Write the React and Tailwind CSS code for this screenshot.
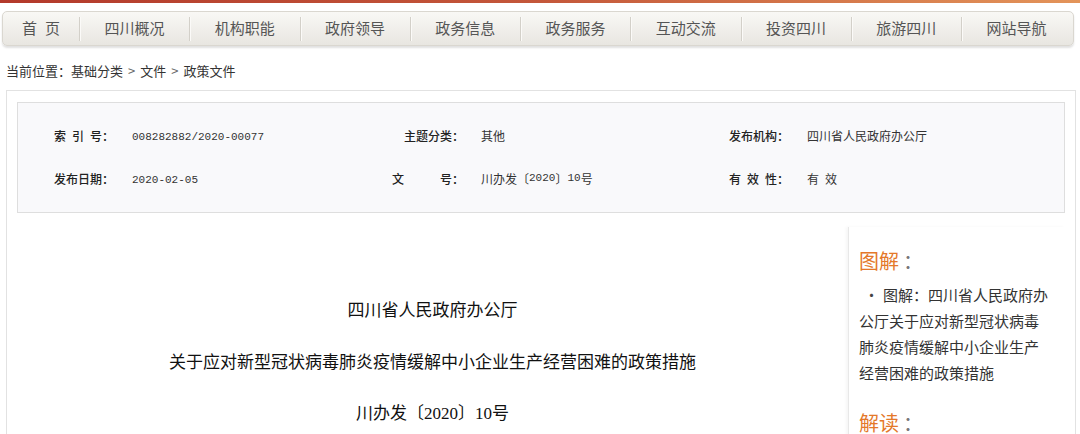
const navItems = ['四川概况', '机构职能', '政府领导', '政务信息', '政务服务', '互动交流', '投资四川', '旅游四川', '网站导航']

const meta = [
  [
    { label: ['索', '引', '号：'], value: <span className="font-['Liberation_Mono',monospace] text-[11px]">008282882/2020-00077</span> },
    { label: ['主题分类：'], right: true, value: '其他' },
    { label: ['发布机构：'], value: '四川省人民政府办公厅' },
  ],
  [
    { label: ['发布日期：'], value: <span className="font-['Liberation_Mono',monospace] text-[11px]">2020-02-05</span> },
    {
      label: ['文', '号：'],
      value: (
        <>
          川办发〔<span className="font-['Liberation_Mono',monospace] text-[11px]">2020</span>〕
          <span className="font-['Liberation_Mono',monospace] text-[11px]">10</span>号
        </>
      ),
    },
    { label: ['有', '效', '性：'], value: <span className="flex gap-[6px]"><span>有</span><span>效</span></span> },
  ],
]

function Label({ parts, right, width }) {
  return (
    <div className={`flex shrink-0 font-medium text-[#222] ${right ? 'justify-end' : 'justify-between'}`} style={{ width }}>
      {parts.map((p, i) => (
        <span key={i}>{p}</span>
      ))}
    </div>
  )
}

export default function App() {
  return (
    <div className="w-[1080px] h-[434px] overflow-hidden bg-white text-[#222] font-['Liberation_Serif','Noto_Sans_CJK_SC',serif]">
      {/* top line */}
      <div className="h-[3px] bg-linear-to-r from-[#b3392b] via-[#c4573a] to-[#e3945a]" />

      {/* nav */}
      <div className="mt-[8px] ml-[2px] w-[1072px] h-[35px] flex items-center rounded-[5px] border border-[#dad7d0] bg-linear-to-b from-[#f9f8f5] to-[#e8e6e1] shadow-[0_2px_2px_rgba(0,0,0,0.12)] text-[15px] text-[#555] font-['Noto_Sans_CJK_SC',sans-serif]">
        <div className="w-[76px] flex justify-center gap-[8px]">
          <span>首</span>
          <span>页</span>
        </div>
        {navItems.map((item) => (
          <div key={item} className="flex items-center">
            <div className="w-px h-[24px] bg-[#d3d0c9] shadow-[1px_0_0_#fbfaf8]" />
            <div className="w-[109.25px] text-center">{item}</div>
          </div>
        ))}
      </div>

      {/* breadcrumb */}
      <div className="h-[44px] pt-[6px] pl-[6px] flex items-center text-[13px] text-[#333] font-['Noto_Sans_CJK_SC',sans-serif]">
        当前位置：基础分类<span className="mx-[5px] text-[#666]">&gt;</span>文件<span className="mx-[5px] text-[#666]">&gt;</span>政策文件
      </div>

      {/* content box */}
      <div className="ml-[6px] w-[1070px] h-[400px] border border-[#e2e2e2] pt-[11px] px-[10px]">
        <div className="h-[111px] border border-[#dedede] bg-[#f9f9fb] pt-[11px] text-[12px] font-['Noto_Sans_CJK_SC',sans-serif]">
          {meta.map((row, r) => (
            <div key={r} className="h-[43px] flex items-center pl-[36px]">
              <Label parts={row[0].label} width={60} />
              <div className="ml-[18px] w-[260px] text-[#333]">{row[0].value}</div>
              <Label parts={row[1].label} right={row[1].right} width={72} />
              <div className="ml-[17px] w-[248px] flex items-center text-[#333]">{row[1].value}</div>
              <Label parts={row[2].label} width={60} />
              <div className="ml-[18px] text-[#333]">{row[2].value}</div>
            </div>
          ))}
        </div>

        <div className="flex">
          <div className="flex-1 pt-[86px] flex flex-col items-center text-[17px] leading-[24px] text-[#111] font-['Liberation_Serif','Noto_Sans_CJK_SC',serif]">
            <div>四川省人民政府办公厅</div>
            <div className="mt-[28px]">关于应对新型冠状病毒肺炎疫情缓解中小企业生产经营困难的政策措施</div>
            <div className="mt-[27px]">川办发〔2020〕10号</div>
          </div>

          <div className="w-[217px] mt-[14px] h-[300px] border-l border-[#e8e8e8] shadow-[-2px_0_3px_rgba(0,0,0,0.04)] pt-[20px] pl-[10px] font-['Noto_Sans_CJK_SC',sans-serif]">
            <div className="text-[20px] leading-[28px] text-[#e4782a]">
              图解<span className="ml-[4px] text-[#777]">：</span>
            </div>
            <div className="mt-[7px] w-[190px] text-[15px] leading-[26px] text-[#333]">
              <span className="inline-block w-[24px] pl-[5px] text-[#444]">•</span>
              图解：四川省人民政府办公厅关于应对新型冠状病毒肺炎疫情缓解中小企业生产经营困难的政策措施
            </div>
            <div className="mt-[23px] text-[20px] leading-[28px] text-[#e4782a]">
              解读<span className="ml-[4px] text-[#777]">：</span>
            </div>
          </div>
        </div>
      </div>
    </div>
  )
}
